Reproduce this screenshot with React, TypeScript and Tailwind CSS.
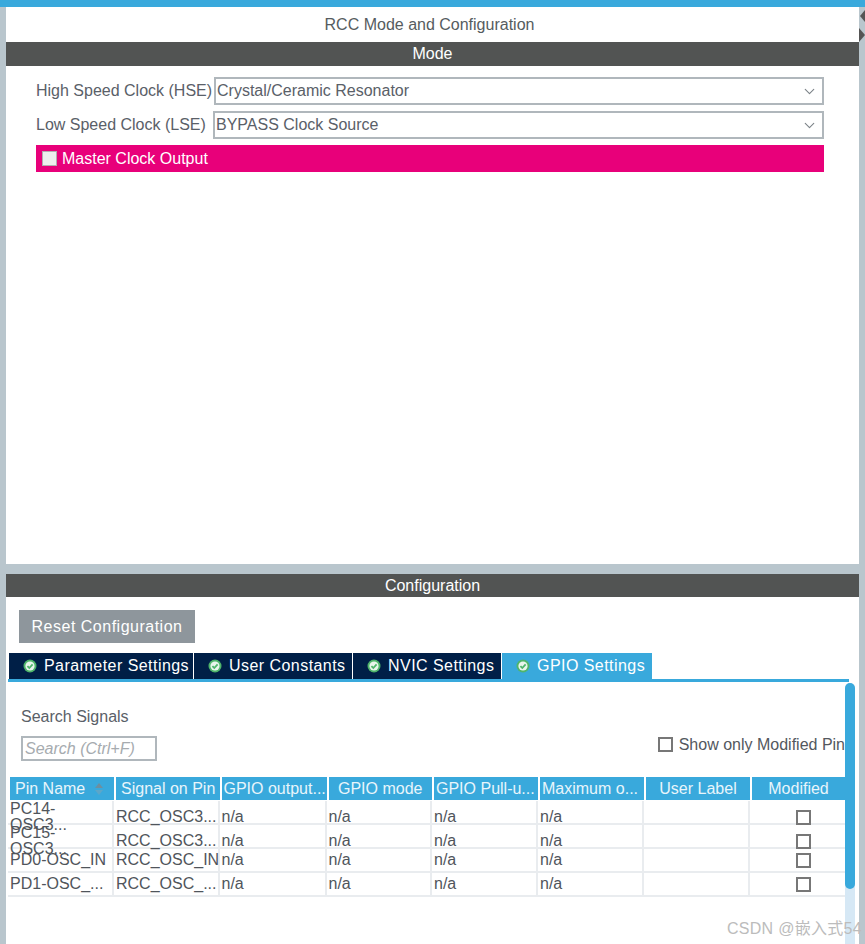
import { ChevronDown } from 'lucide-react';

const columns = ['Pin Name', 'Signal on Pin', 'GPIO output...', 'GPIO mode', 'GPIO Pull-u...', 'Maximum o...', 'User Label', 'Modified'];

const rows = [
  ['PC14-OSC3...', 'RCC_OSC3...'],
  ['PC15-OSC3...', 'RCC_OSC3...'],
  ['PD0-OSC_IN', 'RCC_OSC_IN'],
  ['PD1-OSC_...', 'RCC_OSC_...'],
];

const tabs = ['Parameter Settings', 'User Constants', 'NVIC Settings'];

const gridCols = 'grid grid-cols-[106px_105.5px_107px_105.5px_106px_106px_106px_95px]';

const CheckIcon = () => (
  <svg width="14" height="14" viewBox="0 0 14 14" className="shrink-0">
    <circle cx="7" cy="7" r="6.5" fill="#4fb56b" />
    <circle cx="7" cy="7" r="4.6" fill="#e9f5ec" />
    <path d="M4.4 7.1 6.3 9l3.3-3.6" fill="none" stroke="#4fb56b" strokeWidth="1.8" />
  </svg>
);

const SelectRow = ({ label, value, labelWidth }: { label: string; value: string; labelWidth: string }) => (
  <div className="flex items-center h-[28px]">
    <span className={`${labelWidth} shrink-0 whitespace-nowrap`}>{label}</span>
    <div className="flex-1 h-[28px] border-2 border-[#b0b7bc] bg-white flex items-center justify-between pl-[1px] pr-[4px]">
      <span>{value}</span>
      <ChevronDown size={17} strokeWidth={1.6} className="text-[#7c8388]" />
    </div>
  </div>
);

export default function App() {
  return (
    <div className="relative w-[865px] h-[944px] overflow-hidden bg-[#b9c6cd] flex flex-col text-[16px] leading-none text-[#5a6068] font-['Liberation_Sans',Arial,sans-serif]">
      <div className="h-[7px] bg-[#39a9dc] shrink-0" />

      {/* Mode panel */}
      <div className="mx-[6px] h-[557px] bg-white shrink-0 flex flex-col">
        <div className="h-[35px] flex items-center justify-center pt-[1px] pr-[6px] text-[#565c60]">RCC Mode and Configuration</div>
        <div className="h-[24px] bg-[#525453] text-white flex items-center justify-center">Mode</div>
        <div className="pl-[30px] pr-[35px] pt-[11px] flex flex-col gap-[6px]">
          <SelectRow label="High Speed Clock (HSE)" value="Crystal/Ceramic Resonator" labelWidth="w-[178px]" />
          <SelectRow label="Low Speed Clock (LSE)" value="BYPASS Clock Source" labelWidth="w-[177px]" />
          <div className="h-[27px] -mt-[0px] bg-[#e8007a] text-white flex items-center pl-[6px] gap-[5px]">
            <span className="w-[15px] h-[15px] bg-[#eeeeee] border border-[#b0b0b0]" />
            <span>Master Clock Output</span>
          </div>
        </div>
      </div>

      <div className="h-[10px] shrink-0" />

      {/* Configuration panel */}
      <div className="mx-[6px] flex-1 bg-white flex flex-col min-h-0">
        <div className="h-[23px] bg-[#525453] text-white flex items-center justify-center shrink-0">Configuration</div>

        <div className="pl-[13px] pt-[13px]">
          <button className="w-[176px] h-[33px] bg-[#8e969c] text-white tracking-[0.5px]">Reset Configuration</button>
        </div>

        <div className="ml-[2px] mt-[10px] border-b-[3px] border-[#39a9dc] flex items-stretch h-[29px] mr-[10px]">
          <div className="w-[1px]" />
          {tabs.map((tab, i) => (
            <div
              key={tab}
              className={`h-[26px] bg-[#001f47] text-white flex items-center gap-[7px] pl-[14px] border-r border-white tracking-[0.45px] ${
                i === 0 ? 'w-[185px]' : i === 1 ? 'w-[159px]' : 'w-[149px]'
              }`}
            >
              <CheckIcon />
              <span className="whitespace-nowrap">{tab}</span>
            </div>
          ))}
          <div className="h-[26px] w-[150px] bg-[#39a9dc] text-white flex items-center gap-[7px] pl-[14px] tracking-[0.45px]">
            <CheckIcon />
            <span className="whitespace-nowrap">GPIO Settings</span>
          </div>
        </div>

        <div className="flex flex-1 min-h-0">
          <div className="w-[839px] overflow-hidden shrink-0">
            <div className="pl-[15px] pt-[27px] text-[#5a6068]">Search Signals</div>
            <div className="flex items-center justify-between pl-[15px] mt-[11px] h-[25px]">
              <div className="w-[136px] h-[25px] border-2 border-[#b0b7bc] flex items-center pl-[2px] italic text-[#a6abaf]">Search (Ctrl+F)</div>
              <label className="flex items-center gap-[6px] whitespace-nowrap mr-[-8px] -mt-[8px] text-[#53585e]">
                <span className="w-[15px] h-[15px] border-2 border-[#777] bg-white" />
                Show only Modified Pins
              </label>
            </div>

            <div className={`${gridCols} mt-[16px] ml-[3px] w-max`}>
              {columns.map((col, i) => (
                <div
                  key={col}
                  className={`h-[24px] bg-[#39a9dc] text-[#e8f5fb] border-l-[1px] border-r-[1px] border-b-[1px] border-white flex items-center whitespace-nowrap ${
                    i === 0 ? 'pl-[5px]' : i === 1 ? 'pl-[5px]' : i === 2 || i === 5 || i === 4 ? 'pl-[2px]' : 'justify-center'
                  }`}
                >
                  {col}
                  {i === 0 && (
                    <svg width="10" height="14" viewBox="0 0 10 14" className="ml-[9px]">
                      <path d="M5 1 9 6H1z" fill="#6e8f9f" />
                      <path d="M5 13 9 8H1z" fill="#5da6c8" />
                    </svg>
                  )}
                </div>
              ))}
            </div>
            {rows.map((row) => (
              <div key={row[0]} className={`${gridCols} ml-[2px] w-max h-[24px] border-b-2 border-[#e9ecef] text-[#50555b]`}>
                {columns.map((col, i) => (
                  <div key={col} className="border-r-2 border-[#e9ecef] flex items-center pl-[2px] last:border-r-0">
                    {i < 2 ? row[i] : i < 6 ? 'n/a' : null}
                    {i === 7 && <span className="ml-[44px] w-[15px] h-[15px] border-2 border-[#777] bg-white" />}
                  </div>
                ))}
              </div>
            ))}
          </div>

          {/* Scrollbar */}
          <div className="w-[10px] bg-[#d6e8f5] mt-[1px] rounded-t-[5px] shrink-0">
            <div className="h-[206px] bg-[#39a9dc] rounded-[5px]" />
          </div>
        </div>
      </div>

      {/* Splitter arrows over the right edge */}
      <svg width="6" height="36" viewBox="0 0 6 36" className="absolute left-[859px] top-[7px]">
        <path d="M6 3 1 9l5 6z" fill="#555" />
        <path d="M0 21l6 7-6 7z" fill="#555" />
      </svg>

      <div className="absolute right-[3px] top-[920px] text-[#bcbcbc] text-[16px] font-['Liberation_Sans','Noto_Sans_CJK_SC',sans-serif] leading-[18px] tracking-[0.3px]">
        CSDN @嵌入式54
      </div>
    </div>
  );
}
